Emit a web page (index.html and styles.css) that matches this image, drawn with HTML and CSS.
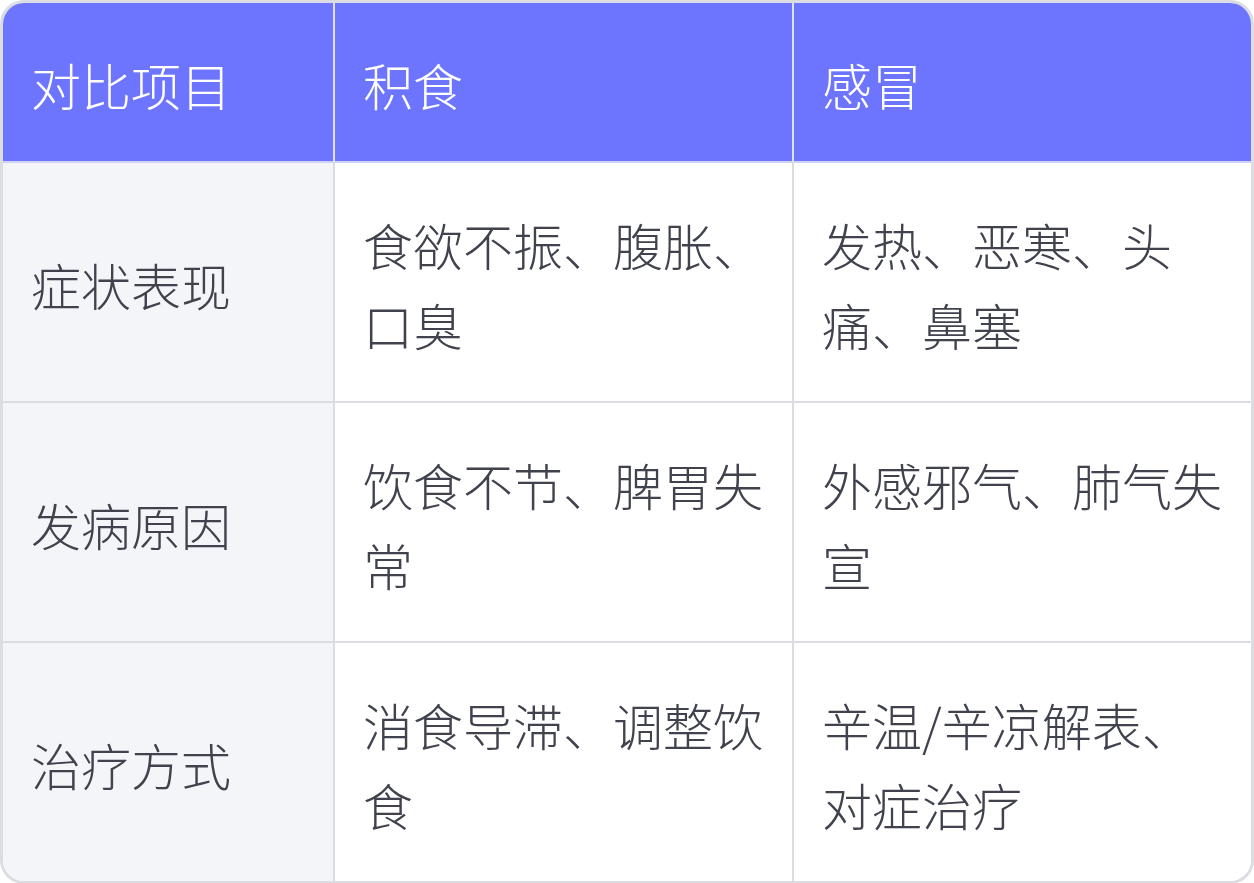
FILE: index.html
```html
<!DOCTYPE html>
<html lang="zh">
<head>
<meta charset="utf-8">
<title>积食与感冒对比</title>
<link rel="stylesheet" href="styles.css">
</head>
<body>
<div class="table">
  <div class="cell head">对比项目</div>
  <div class="cell head">积食</div>
  <div class="cell head last">感冒</div>

  <div class="cell label">症状表现</div>
  <div class="cell">食欲不振、腹胀、口臭</div>
  <div class="cell last">发热、恶寒、头痛、鼻塞</div>

  <div class="cell label">发病原因</div>
  <div class="cell">饮食不节、脾胃失常</div>
  <div class="cell last">外感邪气、肺气失宣</div>

  <div class="cell label bottom">治疗方式</div>
  <div class="cell bottom">消食导滞、调整饮食</div>
  <div class="cell last bottom">辛温/辛凉解表、对症治疗</div>
</div>
</body>
</html>
```
FILE: styles.css
```css
html, body {
  margin: 0;
  padding: 0;
  background: #ffffff;
}
.table {
  width: 1254px;
  box-sizing: border-box;
  border: 3px solid #dcdde2;
  border-radius: 24px;
  overflow: hidden;
  display: grid;
  grid-template-columns: 332px 459px 1fr;
  font-family: "Noto Sans CJK SC", "Noto Sans", sans-serif;
  font-size: 50px;
  font-weight: 300;
  line-height: 80px;
  color: #40434e;
}
.cell {
  padding: 41px 28px 37px;
  border-right: 2px solid #dcdde2;
  border-bottom: 2px solid #dcdde2;
  display: flex;
  align-items: center;
  background: #ffffff;
}
.cell.last {
  border-right: none;
}
.cell.bottom {
  border-bottom: none;
}
.cell.head {
  background: #6d75ff;
  color: #ffffff;
  border-bottom-color: #cfd2f7;
  border-right-color: #dfe1fb;
}
.cell.label {
  background: #f4f5f9;
}
```
